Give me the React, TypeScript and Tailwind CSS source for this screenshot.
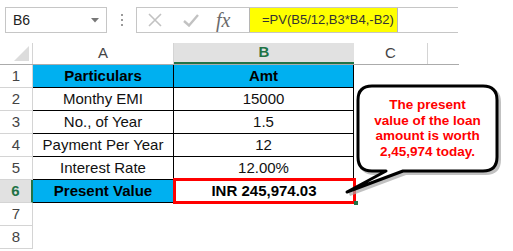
import React from "react";

type Row = {
  n: number;
  a?: string;
  b?: string;
  head?: boolean;
  result?: boolean;
};

const rows: Row[] = [
  { n: 1, a: "Particulars", b: "Amt", head: true },
  { n: 2, a: "Monthy EMI", b: "15000" },
  { n: 3, a: "No., of Year", b: "1.5" },
  { n: 4, a: "Payment Per Year", b: "12" },
  { n: 5, a: "Interest Rate", b: "12.00%" },
  { n: 6, a: "Present Value", b: "INR 245,974.03", result: true },
  { n: 7 },
  { n: 8 },
];

function FormulaBar() {
  return (
    <div className="flex h-[43px] items-start pt-[7px]">
      {/* name box */}
      <div className="ml-[5px] flex h-[26px] w-[102px] items-center justify-between border border-[#c6c6c6] pl-[7px] pr-[7px] text-[14px] text-[#222]">
        <span>B6</span>
        <svg width="8" height="5" viewBox="0 0 8 5">
          <path d="M0 0 L8 0 L4 4.5 Z" fill="#777" />
        </svg>
      </div>
      {/* dots */}
      <div className="ml-[14px] flex h-[26px] flex-col items-center justify-center gap-[3px]">
        <span className="h-[2px] w-[2px] bg-[#9a9a9a]" />
        <span className="h-[2px] w-[2px] bg-[#9a9a9a]" />
        <span className="h-[2px] w-[2px] bg-[#9a9a9a]" />
      </div>
      {/* buttons */}
      <div className="ml-[13px] flex h-[26px] w-[113px] items-center border border-l-[#c6c6c6] border-y-[#c6c6c6] border-r-0">
        <svg className="ml-[11px]" width="14" height="14" viewBox="0 0 14 14">
          <path d="M1 1 L13 13 M13 1 L1 13" stroke="#c2c2c2" strokeWidth="1.6" fill="none" />
        </svg>
        <svg className="ml-[21px]" width="16" height="13" viewBox="0 0 16 13">
          <path d="M1 7 L6 11.5 L15 1" stroke="#c2c2c2" strokeWidth="2.4" fill="none" />
        </svg>
        <span className="ml-[17px] italic text-[20px] leading-none text-[#6b6b6b]" style={{ fontFamily: '"Liberation Serif", serif' }}>
          fx
        </span>
      </div>
      {/* formula input */}
      <div className="flex h-[26px] w-[209px] border-y border-[#c6c6c6]">
        <div className="flex w-[149px] items-center border-x border-[#b5b5b5] bg-[#ffff00] pl-[12px] text-[13px] text-[#333]">
          =PV(B5/12,B3*B4,-B2)
        </div>
      </div>
    </div>
  );
}

function HeaderRow() {
  return (
    <div className="flex h-[22px] w-[459px] border-b border-[#ababab]">
      <div className="relative w-[33px] border-r border-[#d4d4d4]">
        <svg className="absolute bottom-[3px] right-[3px]" width="15" height="15" viewBox="0 0 15 15">
          <path d="M15 0 L15 15 L0 15 Z" fill="#dcdcdc" />
        </svg>
      </div>
      <div className="flex w-[141px] items-center justify-center border-r border-[#d4d4d4] text-[15px] text-[#444]">A</div>
      <div className="flex w-[180px] items-center justify-center border-b-2 border-[#217346] bg-[#e1e1e1] text-[15px] font-bold text-[#217346]">
        B
      </div>
      <div className="flex w-[74px] items-center justify-center border-r border-[#d4d4d4] text-[15px] text-[#444]">C</div>
      <div className="w-[31px]" />
    </div>
  );
}

function SheetRow({ row }: { row: Row }) {
  const inTable = !!row.a;
  const blue = row.head || row.result;
  return (
    <div className="flex h-[23px]">
      <div
        className={
          row.result
            ? "flex w-[33px] items-center justify-center border-b border-r-2 border-b-[#d4d4d4] border-r-[#217346] bg-[#e1e1e1] text-[15px] font-bold text-[#217346]"
            : "flex w-[33px] items-center justify-center border-b border-r border-[#d4d4d4] text-[15px] text-[#444]"
        }
      >
        {row.n}
      </div>
      {inTable ? (
        <>
          <div
            className={
              blue
                ? "flex w-[141px] items-center justify-center border-b border-r border-black bg-[#00b0f0] text-[15px] font-bold text-black"
                : "flex w-[141px] items-center justify-center border-b border-r border-black text-[15px] text-[#111]"
            }
          >
            {row.a}
          </div>
          <div
            className={
              row.head
                ? "flex w-[180px] items-center justify-center border-b border-r border-black bg-[#00b0f0] text-[15px] font-bold text-black"
                : row.result
                ? "relative flex w-[180px] items-center justify-center text-[15px] font-bold text-black"
                : "flex w-[180px] items-center justify-center border-b border-r border-black text-[15px] text-[#111]"
            }
          >
            {row.b}
            {row.result && (
              <>
                <div className="absolute left-[-1px] top-[-2px] h-[26px] w-[183px] border-[3px] border-[#ff0000]" />
                <div className="absolute bottom-[-2px] right-[-4px] h-[4px] w-[4px] bg-[#217346]" />
              </>
            )}
          </div>
        </>
      ) : null}
    </div>
  );
}

function Callout() {
  const shape =
    "M372 86 H483 Q497 86 497 100 V157 Q497 171 483 171 H403 L347 192 L386 171 H372 Q358 171 358 157 V100 Q358 86 372 86 Z";
  return (
    <>
      <svg className="pointer-events-none absolute left-0 top-0" width="513" height="251" viewBox="0 0 513 251">
        <path d={shape} transform="translate(2.5 2.5)" fill="#a8a8a8" stroke="#a8a8a8" strokeWidth="3" opacity="0.7" />
        <path d={shape} fill="#fff" stroke="#000" strokeWidth="3" strokeLinejoin="round" />
      </svg>
      <div className="absolute left-[358px] top-[97px] w-[139px] text-center text-[13.5px] font-bold leading-[15.5px] text-[#ff0000]">
        The present
        <br />
        value of the loan
        <br />
        amount is worth
        <br />
        2,45,974 today.
      </div>
    </>
  );
}

export default function App() {
  return (
    <div
      className="relative h-[251px] w-[513px] overflow-hidden bg-white"
      style={{ fontFamily: '"Liberation Sans", Arial, sans-serif' }}
    >
      <FormulaBar />
      <HeaderRow />
      {rows.map((r) => (
        <SheetRow key={r.n} row={r} />
      ))}
      <Callout />
    </div>
  );
}
